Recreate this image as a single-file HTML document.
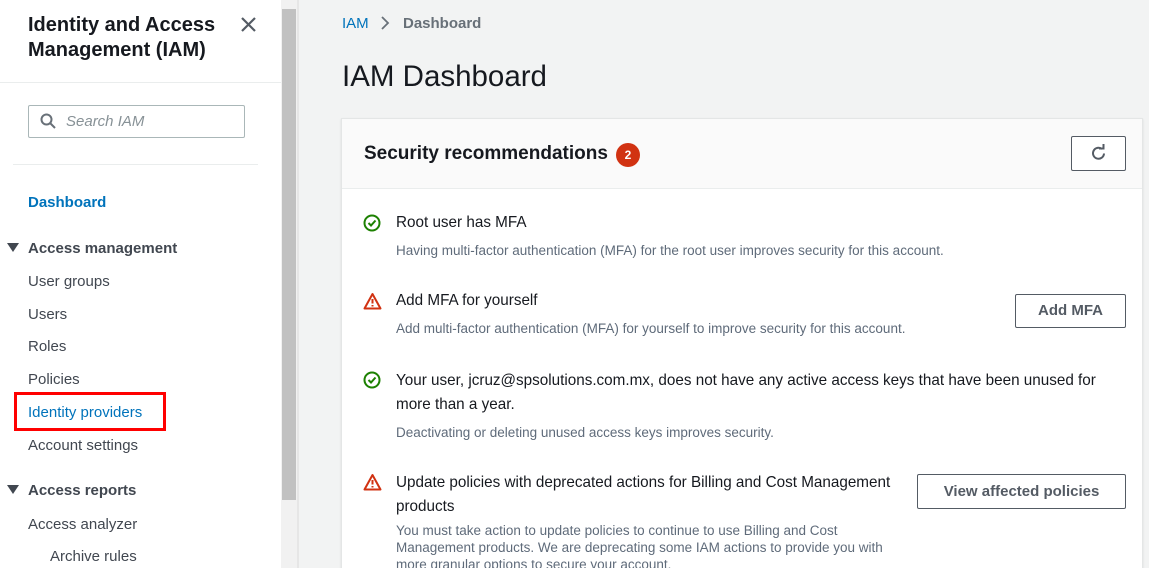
<!DOCTYPE html>
<html><head><style>
html,body{margin:0;width:1149px;height:568px;overflow:hidden}
body{background:#f2f3f3;font-family:"Liberation Sans",Arial,sans-serif;position:relative;color:#16191f}
.a{position:absolute;white-space:nowrap}
#side{position:absolute;left:0;top:0;width:281px;height:568px;background:#fff}
.nav{font-size:15px;color:#414750}
.sec{font-size:15px;font-weight:bold;color:#414750}
.tri{display:inline-block;width:0;height:0;border-left:6px solid transparent;border-right:6px solid transparent;border-top:9px solid #414750;margin-right:9px;vertical-align:1px}
.t{font-size:15.25px;color:#16191f}
.d{font-size:13.5px;color:#5f6b7a}
.btn{position:absolute;border:1px solid #545b64;border-radius:2px;background:#fff;font-weight:bold;font-size:15px;color:#545b64;text-align:center;box-sizing:border-box}
</style></head><body>
<div id="side">
<div class="a" style="left:28px;top:13px;font-size:20px;font-weight:bold;line-height:25px">Identity and Access<br>Management (IAM)</div>
<svg class="a" style="left:240px;top:16px" width="17" height="17" viewBox="0 0 17 17"><path d="M2 2L15 15M15 2L2 15" stroke="#545b64" stroke-width="2.2"/></svg>
<div class="a" style="left:0;top:82px;width:281px;height:1px;background:#eaeded"></div>
<div class="a" style="left:28px;top:105px;width:215px;height:31px;border:1px solid #aab7b8;border-radius:2px"></div>
<svg class="a" style="left:40px;top:113px" width="16" height="16" viewBox="0 0 16 16"><circle cx="6.5" cy="6.5" r="5" fill="none" stroke="#687078" stroke-width="2"/><path d="M10 10L15 15" stroke="#687078" stroke-width="2"/></svg>
<div class="a" style="left:66px;top:113px;font-size:15px;font-style:italic;color:#879196">Search IAM</div>
<div class="a" style="left:13px;top:164px;width:245px;height:1px;background:#eaeded"></div>
<div class="a" style="left:28px;top:194px;font-size:15px;font-weight:bold;color:#0073bb">Dashboard</div>
<div class="a sec" style="left:7px;top:240px"><span class="tri"></span>Access management</div>
<div class="a nav" style="left:28px;top:273px">User groups</div>
<div class="a nav" style="left:28px;top:306px">Users</div>
<div class="a nav" style="left:28px;top:338px">Roles</div>
<div class="a nav" style="left:28px;top:371px">Policies</div>
<div class="a" style="left:14px;top:392px;width:146px;height:33px;border:3px solid #ff0000"></div>
<div class="a nav" style="left:28px;top:404px;color:#0073bb">Identity providers</div>
<div class="a nav" style="left:28px;top:437px">Account settings</div>
<div class="a sec" style="left:7px;top:482px"><span class="tri"></span>Access reports</div>
<div class="a nav" style="left:28px;top:516px">Access analyzer</div>
<div class="a nav" style="left:50px;top:548px">Archive rules</div>
</div>
<div class="a" style="left:281px;top:0;width:16px;height:568px;background:#f1f1f1"></div>
<div class="a" style="left:282px;top:9px;width:14px;height:491px;background:#c1c1c1"></div>
<div class="a" style="left:297px;top:0;width:2px;height:568px;background:#e6e6e6"></div>
<div class="a" style="left:342px;top:15px;font-size:15px;color:#0073bb">IAM</div>
<svg class="a" style="left:380px;top:16px" width="10" height="14" viewBox="0 0 10 14"><path d="M2 1L8 7L2 13" fill="none" stroke="#687078" stroke-width="1.8"/></svg>
<div class="a" style="left:403px;top:15px;font-size:15px;font-weight:bold;color:#687078">Dashboard</div>
<div class="a" style="left:342px;top:60px;font-size:29.5px;color:#16191f">IAM Dashboard</div>
<div class="a" style="left:341px;top:118px;width:800px;height:460px;background:#fff;border:1px solid #e4e6e6;box-shadow:0 1px 2px rgba(0,0,0,.1)"></div>
<div class="a" style="left:342px;top:119px;width:800px;height:69px;background:#fafafa;border-bottom:1px solid #eaeded"></div>
<div class="a" style="left:364px;top:143px;font-size:19px;font-weight:bold">Security recommendations</div>
<div class="a" style="left:616px;top:143px;width:24px;height:24px;border-radius:50%;background:#d13212;color:#fff;font-size:12px;font-weight:bold;text-align:center;line-height:24px">2</div>
<div class="btn" style="left:1071px;top:136px;width:55px;height:35px"></div>
<svg class="a" style="left:1089px;top:144px" width="19" height="19" viewBox="0 0 19 19"><path d="M15 9.5A5.5 5.5 0 1 1 13 5" fill="none" stroke="#545b64" stroke-width="2"/><path d="M10 4.5H14.5V0" fill="none" stroke="#545b64" stroke-width="2"/></svg>
<svg class="a" style="left:363px;top:214px" width="18" height="18" viewBox="0 0 18 18"><circle cx="9" cy="9" r="7.5" fill="none" stroke="#1d8102" stroke-width="2"/><path d="M5.5 9L8 11.5L12.5 6.5" fill="none" stroke="#1d8102" stroke-width="2"/></svg>
<div class="a t" style="left:396px;top:214px">Root user has MFA</div>
<div class="a d" style="left:396px;top:243px">Having multi-factor authentication (MFA) for the root user improves security for this account.</div>
<svg class="a" style="left:363px;top:292px" width="19" height="18" viewBox="0 0 19 18"><path d="M9.5 2L17.5 16.5H1.5Z" fill="none" stroke="#d13212" stroke-width="2" stroke-linejoin="round"/><path d="M9.5 7V11.5M9.5 13V14.5" stroke="#d13212" stroke-width="2"/></svg>
<div class="a t" style="left:396px;top:292px">Add MFA for yourself</div>
<div class="a d" style="left:396px;top:321px">Add multi-factor authentication (MFA) for yourself to improve security for this account.</div>
<div class="btn" style="left:1015px;top:294px;width:111px;height:34px;line-height:32px">Add MFA</div>
<svg class="a" style="left:363px;top:371px" width="18" height="18" viewBox="0 0 18 18"><circle cx="9" cy="9" r="7.5" fill="none" stroke="#1d8102" stroke-width="2"/><path d="M5.5 9L8 11.5L12.5 6.5" fill="none" stroke="#1d8102" stroke-width="2"/></svg>
<div class="a t" style="left:396px;top:369px;line-height:24px">Your user, jcruz@spsolutions.com.mx, does not have any active access keys that have been unused for<br>more than a year.</div>
<div class="a d" style="left:396px;top:425px">Deactivating or deleting unused access keys improves security.</div>
<svg class="a" style="left:363px;top:473px" width="19" height="18" viewBox="0 0 19 18"><path d="M9.5 2L17.5 16.5H1.5Z" fill="none" stroke="#d13212" stroke-width="2" stroke-linejoin="round"/><path d="M9.5 7V11.5M9.5 13V14.5" stroke="#d13212" stroke-width="2"/></svg>
<div class="a t" style="left:396px;top:471px;line-height:24px">Update policies with deprecated actions for Billing and Cost Management<br>products</div>
<div class="btn" style="left:917px;top:474px;width:209px;height:35px;line-height:33px">View affected policies</div>
<div class="a d" style="left:396px;top:522px;line-height:17px">You must take action to update policies to continue to use Billing and Cost<br>Management products. We are deprecating some IAM actions to provide you with<br>more granular options to secure your account.</div>
</body></html>
